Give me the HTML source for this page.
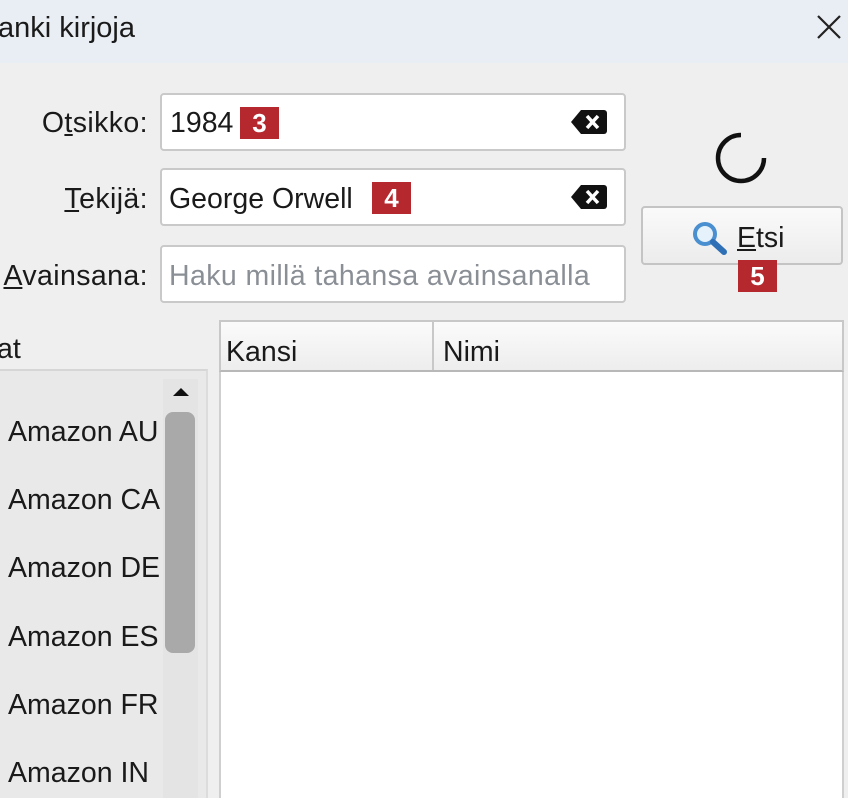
<!DOCTYPE html>
<html><head><meta charset="utf-8"><style>
*{margin:0;padding:0;box-sizing:border-box}
body{width:848px;height:798px;overflow:hidden;background:#efefef;font-family:"Liberation Sans",sans-serif;color:#1a1a1a;position:relative}
.a{position:absolute}
.t{font-size:28.5px;white-space:nowrap;letter-spacing:0}
.inp{position:absolute;left:160px;width:466px;height:58px;background:#fff;border:2px solid #c9c9c9;border-radius:4px}
.badge{position:absolute;background:#b5282e;color:#fff;font-weight:bold;font-size:26px;text-align:center;line-height:32px;width:39px;height:32px}
.lbl{position:absolute;right:700px;font-size:28.5px;letter-spacing:0.4px}
.item{position:absolute;left:8px;font-size:28.5px}
</style></head><body>
<div class="a" style="left:0;top:0;width:848px;height:63px;background:#e9eef4"></div>
<div class="a t" style="left:-2px;top:12px;font-size:29px">anki kirjoja</div>
<svg class="a" style="left:815px;top:13px" width="28" height="28"><path d="M3 3L25 25M25 3L3 25" stroke="#222" stroke-width="2.2"/></svg>

<div class="lbl" style="top:107px">O<u>t</u>sikko:</div>
<div class="lbl" style="top:183px"><u>T</u>ekijä:</div>
<div class="lbl" style="top:260px"><u>A</u>vainsana:</div>

<div class="inp" style="top:93px"></div>
<div class="a t" style="left:170px;top:107px">1984</div>
<div class="badge" style="left:240px;top:107px">3</div>
<svg class="a" style="left:570px;top:108px" width="38" height="28"><path d="M11 2H34a3 3 0 0 1 3 3V23a3 3 0 0 1-3 3H11L1 14Z" fill="#111"/><path d="M17 8L28 20M28 8L17 20" stroke="#fff" stroke-width="3.5"/></svg>

<div class="inp" style="top:168px"></div>
<div class="a t" style="left:169px;top:183px">George Orwell</div>
<div class="badge" style="left:372px;top:182px">4</div>
<svg class="a" style="left:570px;top:183px" width="38" height="28"><path d="M11 2H34a3 3 0 0 1 3 3V23a3 3 0 0 1-3 3H11L1 14Z" fill="#111"/><path d="M17 8L28 20M28 8L17 20" stroke="#fff" stroke-width="3.5"/></svg>

<div class="inp" style="top:245px"></div>
<div class="a t" style="left:169px;top:260px;color:#8a8f96;letter-spacing:0.4px">Haku millä tahansa avainsanalla</div>

<svg class="a" style="left:712px;top:129px" width="58" height="58"><path d="M29 6A23 23 0 1 0 52 29" fill="none" stroke="#111" stroke-width="4.5"/></svg>

<div class="a" style="left:641px;top:206px;width:202px;height:59px;border:2px solid #c4c4c4;border-radius:4px;background:linear-gradient(#fafafa,#ececec)"></div>
<svg class="a" style="left:690px;top:219px" width="42" height="40"><circle cx="15" cy="15" r="10" fill="#e6f2fb" stroke="#4a8fd0" stroke-width="4"/><path d="M23 23L34 33" stroke="#2f6fb5" stroke-width="6" stroke-linecap="round"/></svg>
<div class="a t" style="left:737px;top:222px"><u>E</u>tsi</div>
<div class="badge" style="left:738px;top:260px">5</div>

<div class="a t" style="left:-3px;top:333px">at</div>
<div class="a" style="left:0;top:369px;width:208px;height:429px;background:#e9e9e9;border-top:2px solid #d6d6d6;border-right:2px solid #dcdcdc"></div>
<div class="item" style="top:416px">Amazon AU</div>
<div class="item" style="top:484px">Amazon CA</div>
<div class="item" style="top:552px">Amazon DE</div>
<div class="item" style="top:621px">Amazon ES</div>
<div class="item" style="top:689px">Amazon FR</div>
<div class="item" style="top:757px">Amazon IN</div>
<div class="a" style="left:163px;top:379px;width:35px;height:419px;background:#e4e4e4"></div>
<svg class="a" style="left:170px;top:385px" width="22" height="14"><path d="M3 11L11 3L19 11Z" fill="#111"/></svg>
<div class="a" style="left:165px;top:412px;width:30px;height:241px;background:#a9a9a9;border-radius:8px"></div>

<div class="a" style="left:219px;top:320px;width:625px;height:478px;background:#fff;border-left:2px solid #cfcfcf;border-right:2px solid #cfcfcf"></div>
<div class="a" style="left:219px;top:320px;width:625px;height:52px;background:linear-gradient(#fbfbfb,#ededed);border:2px solid #c8c8c8;border-bottom:2px solid #b8b8b8"></div>
<div class="a" style="left:432px;top:322px;width:2px;height:48px;background:#c8c8c8"></div>
<div class="a t" style="left:226px;top:336px">Kansi</div>
<div class="a t" style="left:443px;top:336px">Nimi</div>
</body></html>
